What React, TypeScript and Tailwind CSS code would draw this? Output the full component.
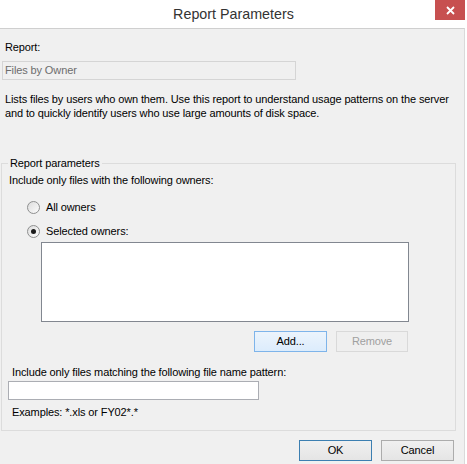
import { useState } from 'react'

// Win8-style "Report Parameters" dialog
function Radio({ checked, label }: { checked: boolean; label: string }) {
  return (
    <div className="flex items-center h-[13px] pl-[25px]">
      <span className="w-[13px] h-[13px] rounded-full border border-[#8e8f8f] bg-linear-to-br from-[#dcdcdc] to-[#fcfcfc] flex items-center justify-center shrink-0">
        {checked && <span className="w-[5px] h-[5px] rounded-full bg-[#1a1a1a]" />}
      </span>
      <span className="ml-[6px]">{label}</span>
    </div>
  )
}

function Button({
  children,
  variant = 'normal',
  className = '',
}: {
  children: React.ReactNode
  variant?: 'normal' | 'hover' | 'default' | 'disabled'
  className?: string
}) {
  const styles = {
    normal: 'border-[#acacac] bg-linear-to-b from-[#f0f0f0] to-[#e5e5e5] text-black',
    hover: 'border-[#7eb4ea] bg-linear-to-b from-[#ecf4fc] to-[#dcecfc] text-black',
    default: 'border-[#3c7fb1] bg-linear-to-b from-[#f0f0f0] to-[#e5e5e5] text-black',
    disabled: 'border-[#d9d9d9] bg-[#efefef] text-[#a0a0a0]',
  }
  return (
    <div
      className={
        'h-[21px] border flex items-center justify-center ' + styles[variant] + ' ' + className
      }
    >
      {children}
    </div>
  )
}

export default function App() {
  const [selected] = useState<'all' | 'selected'>('selected')

  return (
    <div className="w-[467px] h-[464px] bg-white flex flex-col font-['Liberation_Sans',Arial,sans-serif] text-[11px] leading-[13px] tracking-[-0.12px] text-black overflow-hidden">
      {/* Title bar */}
      <div className="h-[28px] grid grid-cols-[1fr_auto_1fr] shrink-0">
        <div />
        <div className="flex items-center text-[14.3px] tracking-normal text-[#333] pt-[1px]">Report Parameters</div>
        <div className="flex justify-end items-start pr-[2px]">
          <div className="w-[30px] h-[20px] bg-[#c75050] flex items-center justify-center">
            <svg width="9" height="9" viewBox="0 0 9 9">
              <path d="M1 1 L8 8 M8 1 L1 8" stroke="#fff" strokeWidth="1.8" />
            </svg>
          </div>
        </div>
      </div>

      {/* Body */}
      <div className="flex-1 w-[465px] bg-[#f0f0f0] border-t border-r border-t-[#cfcfcf] border-r-[#dadada] pt-[12px]">
        <div className="pl-[5px]">Report:</div>
        <div className="mt-[7px] ml-[2px] w-[294px] h-[19px] border border-[#d5d5d5] flex items-center pl-[2px] text-[#6d6d6d]">
          Files by Owner
        </div>
        <div className="mt-[12px] pl-[5px] leading-[14px]">
          <div>Lists files by users who own them. Use this report to understand usage patterns on the server</div>
          <div>and to quickly identify users who use large amounts of disk space.</div>
        </div>

        {/* Group box */}
        <fieldset className="mt-[37px] ml-[1px] w-[455px] border border-[#dcdcdc] pb-[11px]">
          <legend className="ml-[6px] px-[2px]">Report parameters</legend>
          <div className="mt-[4px] pl-[7px]">Include only files with the following owners:</div>
          <div className="mt-[14px]">
            <Radio checked={selected === 'all'} label="All owners" />
          </div>
          <div className="mt-[11px]">
            <Radio checked={selected === 'selected'} label="Selected owners:" />
          </div>
          <div className="mt-[4px] ml-[39px] w-[368px] h-[80px] border border-[#828790] bg-white" />
          <div className="mt-[9px] flex ml-[252px] gap-[9px]">
            <Button variant="hover" className="w-[73px]">Add...</Button>
            <Button variant="disabled" className="w-[72px]">Remove</Button>
          </div>
          <div className="mt-[14px] pl-[10px]">Include only files matching the following file name pattern:</div>
          <div className="mt-[2px] ml-[6px] w-[251px] h-[19px] border border-[#abadb3] bg-white" />
          <div className="mt-[6px] pl-[10px]">Examples: *.xls or FY02*.*</div>
        </fieldset>

        <div className="mt-[9px] flex justify-end gap-[9px] pr-[10px]">
          <Button variant="default" className="w-[73px]">OK</Button>
          <Button className="w-[73px]">Cancel</Button>
        </div>
      </div>
    </div>
  )
}
